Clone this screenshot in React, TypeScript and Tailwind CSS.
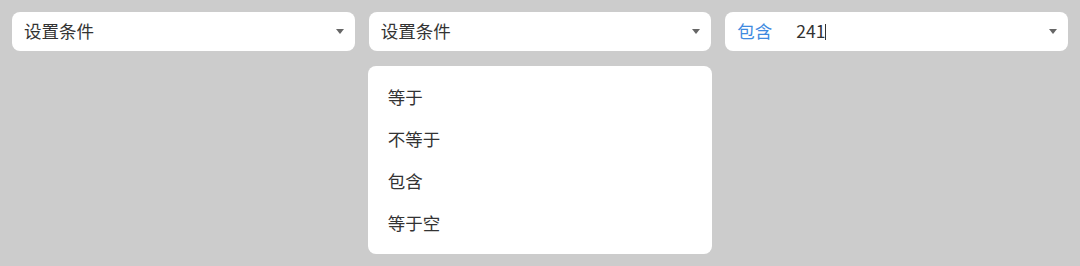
const font = { fontFamily: '"Noto Sans CJK SC", "Noto Sans", sans-serif' };

function Arrow() {
  return (
    <svg width="8" height="5" viewBox="0 0 8 5" className="shrink-0">
      <path d="M0 0 L8 0 L4 5 Z" fill="#666666" />
    </svg>
  );
}

function SelectBox({ children }: { children: React.ReactNode }) {
  return (
    <div className="flex h-[39px] items-center justify-between rounded-[8px] bg-white pl-[12px] pr-[11px]">
      <div className="flex items-center text-[17.5px] text-[#333333]">{children}</div>
      <Arrow />
    </div>
  );
}

const options = ['等于', '不等于', '包含', '等于空'];

export default function App() {
  return (
    <div className="h-[266px] w-[1080px] bg-[#cccccc]" style={font}>
      <div className="flex gap-[14px] px-[12px] pt-[12px]">
        <div className="flex-1">
          <SelectBox>设置条件</SelectBox>
        </div>
        <div className="flex flex-1 flex-col">
          <SelectBox>设置条件</SelectBox>
          <div className="mx-[-1px] mt-[15px] rounded-[8px] bg-white py-[10px]">
            {options.map((o) => (
              <div key={o} className="flex h-[42px] items-center px-[20px] text-[17.5px] text-[#333333]">
                {o}
              </div>
            ))}
          </div>
        </div>
        <div className="flex-1">
          <SelectBox>
            <span className="text-[#3f8ae0]">包含</span>
            <span className="ml-[24px]">241</span>
            <span className="h-[16px] w-[1px] bg-[#333333]" />
          </SelectBox>
        </div>
      </div>
    </div>
  );
}
